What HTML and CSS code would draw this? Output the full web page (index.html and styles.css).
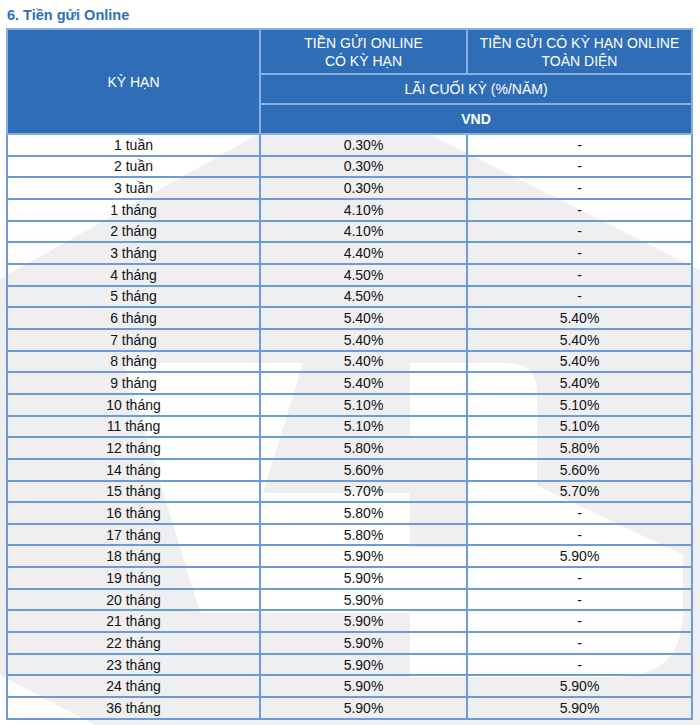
FILE: index.html
```html
<!DOCTYPE html>
<html lang="vi">
<head>
<meta charset="utf-8">
<title>Tiền gửi Online</title>
<link rel="stylesheet" href="styles.css">
</head>
<body>
<div class="page">
  <svg class="watermark" width="700" height="725" viewBox="0 0 700 725" aria-hidden="true">
    <polygon class="wm-gray" points="260,133 427,133 700,270 700,725 95,725 0,675 0,279"/>
    <polygon class="wm-white" points="124,363 303,363 263,493 410,493 410,613 200,613"/>
    <path class="wm-white" d="M410,363 H507 Q537,363 537,393 V487 H540 L683,555 V610 Q683,677 616,677 H410 Z"/>
    <rect class="wm-gray" x="410" y="437" width="57" height="110"/>
  </svg>

  <h2 class="title">6. Tiền gửi Online</h2>

  <table class="rates">
    <colgroup>
      <col class="c-term">
      <col class="c-online">
      <col class="c-full">
    </colgroup>
    <thead>
      <tr class="h1">
        <th rowspan="3">KỲ HẠN</th>
        <th>TIỀN GỬI ONLINE<br>CÓ KỲ HẠN</th>
        <th>TIỀN GỬI CÓ KỲ HẠN ONLINE<br>TOÀN DIỆN</th>
      </tr>
      <tr class="h2">
        <th colspan="2">LÃI CUỐI KỲ (%/NĂM)</th>
      </tr>
      <tr class="h3">
        <th colspan="2" class="cur">VND</th>
      </tr>
    </thead>
    <tbody>
      <tr><td>1 tuần</td><td>0.30%</td><td>-</td></tr>
      <tr><td>2 tuần</td><td>0.30%</td><td>-</td></tr>
      <tr><td>3 tuần</td><td>0.30%</td><td>-</td></tr>
      <tr><td>1 tháng</td><td>4.10%</td><td>-</td></tr>
      <tr><td>2 tháng</td><td>4.10%</td><td>-</td></tr>
      <tr><td>3 tháng</td><td>4.40%</td><td>-</td></tr>
      <tr><td>4 tháng</td><td>4.50%</td><td>-</td></tr>
      <tr><td>5 tháng</td><td>4.50%</td><td>-</td></tr>
      <tr><td>6 tháng</td><td>5.40%</td><td>5.40%</td></tr>
      <tr><td>7 tháng</td><td>5.40%</td><td>5.40%</td></tr>
      <tr><td>8 tháng</td><td>5.40%</td><td>5.40%</td></tr>
      <tr><td>9 tháng</td><td>5.40%</td><td>5.40%</td></tr>
      <tr><td>10 tháng</td><td>5.10%</td><td>5.10%</td></tr>
      <tr><td>11 tháng</td><td>5.10%</td><td>5.10%</td></tr>
      <tr><td>12 tháng</td><td>5.80%</td><td>5.80%</td></tr>
      <tr><td>14 tháng</td><td>5.60%</td><td>5.60%</td></tr>
      <tr><td>15 tháng</td><td>5.70%</td><td>5.70%</td></tr>
      <tr><td>16 tháng</td><td>5.80%</td><td>-</td></tr>
      <tr><td>17 tháng</td><td>5.80%</td><td>-</td></tr>
      <tr><td>18 tháng</td><td>5.90%</td><td>5.90%</td></tr>
      <tr><td>19 tháng</td><td>5.90%</td><td>-</td></tr>
      <tr><td>20 tháng</td><td>5.90%</td><td>-</td></tr>
      <tr><td>21 tháng</td><td>5.90%</td><td>-</td></tr>
      <tr><td>22 tháng</td><td>5.90%</td><td>-</td></tr>
      <tr><td>23 tháng</td><td>5.90%</td><td>-</td></tr>
      <tr><td>24 tháng</td><td>5.90%</td><td>5.90%</td></tr>
      <tr><td>36 tháng</td><td>5.90%</td><td>5.90%</td></tr>
    </tbody>
  </table>
</div>
</body>
</html>
```

FILE: styles.css
```css
* {
  box-sizing: border-box;
}

body {
  margin: 0;
  background: #ffffff;
  font-family: "Liberation Sans", Arial, sans-serif;
}

.page {
  position: relative;
  width: 700px;
  height: 725px;
  overflow: hidden;
}

.watermark {
  position: absolute;
  left: 0;
  top: 0;
}

.wm-gray {
  fill: #efeff2;
}

.wm-white {
  fill: #ffffff;
}

.title {
  position: relative;
  margin: 0;
  padding: 7px 0 4px 7px;
  font-size: 14.5px;
  line-height: 17px;
  font-weight: bold;
  color: #2e6fbe;
}

.rates {
  position: relative;
  margin-left: 6px;
  width: 685px;
  border-collapse: collapse;
  table-layout: fixed;
}

.c-term {
  width: 253px;
}

.c-online {
  width: 207px;
}

.c-full {
  width: 225px;
}

.rates th {
  background: #2f6db7;
  color: #ffffff;
  font-weight: normal;
  font-size: 14px;
  line-height: 18px;
  padding: 0;
  border: 2px solid #88aee2;
  text-align: center;
  vertical-align: middle;
}

.rates .h1 th {
  height: 45px;
}

.rates .h2 th {
  height: 30px;
}

.rates .h3 th {
  height: 30px;
}

.rates th.cur {
  font-weight: bold;
}

.rates td {
  height: 21.67px;
  padding: 0;
  font-size: 14px;
  line-height: 16px;
  color: #111111;
  text-align: center;
  vertical-align: middle;
  border: 2px solid #6b9bdb;
}
```
